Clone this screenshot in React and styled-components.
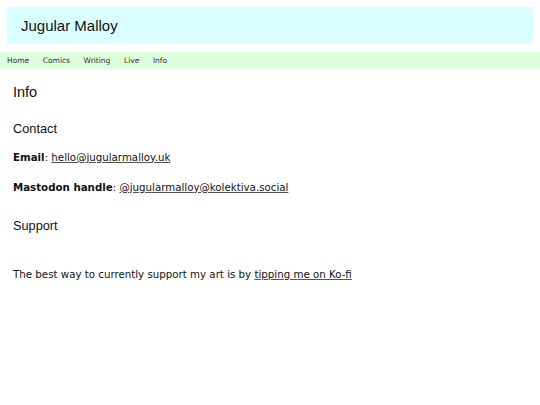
import styled, { createGlobalStyle } from "styled-components";

const GlobalStyle = createGlobalStyle`
  body {
    margin: 0;
    background: #ffffff;
    font-family: "DejaVu Sans", Verdana, sans-serif;
    color: #111111;
  }
`;

const navItems = ["Home", "Comics", "Writing", "Live", "Info"];

function App() {
  return (
    <>
      <GlobalStyle />
      <Banner>
        <SiteTitle>Jugular Malloy</SiteTitle>
      </Banner>
      <NavBar>
        {navItems.map((item) => (
          <NavLink key={item} href="#">{item}</NavLink>
        ))}
      </NavBar>
      <Main>
        <PageTitle>Info</PageTitle>
        <SectionTitle $top={20.5}>Contact</SectionTitle>
        <Text $top={14.5}>
          <strong>Email</strong>: <TextLink href="#">hello@jugularmalloy.uk</TextLink>
        </Text>
        <Text $top={18}>
          <strong>Mastodon handle</strong>: <TextLink href="#">@jugularmalloy@kolektiva.social</TextLink>
        </Text>
        <SectionTitle $top={25.5}>Support</SectionTitle>
        <Text $top={34.5}>
          The best way to currently support my art is by <TextLink href="#">tipping me on Ko-fi</TextLink>
        </Text>
      </Main>
    </>
  );
}

const Banner = styled.header`
  margin: 7px 7px 0;
  height: 37px;
  padding-left: 14px;
  background: #daffff;
`;

const SiteTitle = styled.h1`
  margin: 0;
  font-family: "Liberation Sans", Arial, sans-serif;
  font-size: 15px;
  font-weight: normal;
  line-height: 37px;
  color: #111111;
`;

const NavBar = styled.nav`
  margin-top: 8px;
  height: 17px;
  display: flex;
  align-items: center;
  gap: 13.6px;
  padding-left: 7px;
  background: #ddfddd;
`;

const NavLink = styled.a`
  font-size: 7.5px;
  line-height: 17px;
  color: #333333;
  text-decoration: none;
`;

const Main = styled.main`
  padding: 0 13px;
`;

const PageTitle = styled.h2`
  margin: 14.5px 0 0;
  font-family: "Liberation Sans", Arial, sans-serif;
  font-size: 14.5px;
  font-weight: normal;
  line-height: 17px;
`;

const SectionTitle = styled.h3`
  margin: ${(p) => p.$top}px 0 0;
  font-family: "Liberation Sans", Arial, sans-serif;
  font-size: 12.75px;
  font-weight: normal;
  line-height: 15px;
`;

const Text = styled.p`
  margin: ${(p) => p.$top}px 0 0;
  font-size: 10.25px;
  line-height: 12px;
`;

const TextLink = styled.a`
  color: #111111;
  text-decoration: underline;
  text-decoration-color: #555555;
`;

export default App;
